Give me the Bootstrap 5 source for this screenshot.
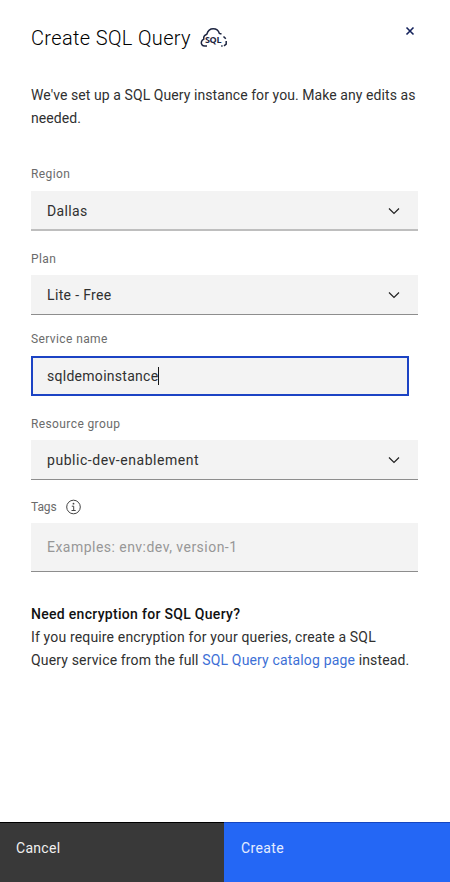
<!DOCTYPE html>
<html lang="en">
<head>
<meta charset="utf-8">
<meta name="viewport" content="width=device-width, initial-scale=1">
<title>Create SQL Query</title>
<link href="https://cdn.jsdelivr.net/npm/bootstrap@5.3.0/dist/css/bootstrap.min.css" rel="stylesheet">
<style>
body { font-family: Roboto, "Open Sans", sans-serif; font-size: 14px; line-height: 23px; letter-spacing: .35px; color: #303030; background: #fff; }
.panel { height: 882px; overflow: hidden; }
.panel-body-area { padding: 26px 32px 0 31px; }
.panel-title { font-size: 20px; line-height: 24px; font-weight: 300; letter-spacing: .35px; color: #000; }
.close-icon { margin-right: 3px; }
.intro { margin-top: 34px; letter-spacing: .075px; white-space: nowrap; }
.field-label { font-size: 12px; line-height: 16px; letter-spacing: .39px; color: #6b6b6b; margin: 0; }
.field-box { height: 40px; padding: 1px 18px 0 16px; background: #f3f3f3; border-bottom: 1px solid #8d8d8d; }
.field-region { margin-top: 36px; }
.field-region .field-label, .field-service .field-label { padding-bottom: 1px; }
.field-region .field-box { border-bottom: 2px solid #bebebe; padding-top: 2px; }
.field-plan { margin-top: 20px; }
.field-service { margin-top: 16px; }
.field-focus { width: 378px; border: 2px solid #1c43c4; padding: 0 14px; letter-spacing: .28px; }
.field-value-wide { letter-spacing: .54px; }
.caret { width: 1px; height: 18px; background: #161616; }
.field-group { margin-top: 20px; }
.field-tags { margin-top: 19px; }
.field-tags .field-label { letter-spacing: -.1px; }
.field-tags .field-box { height: 49px; color: #979797; letter-spacing: .47px; }
.help { margin-top: 31px; letter-spacing: .155px; white-space: nowrap; }
.help strong { font-weight: 500; color: #111; letter-spacing: .3px; }
.help a { color: #3d70d6; }
.action { height: 60px; padding: 13px 16px; letter-spacing: .3px; line-height: 24px; border-top: 1px solid #000; }
.action-cancel { width: 224px; background: #393939; color: #f0f0f0; }
.action-create { background: #2467f5; color: #e4edff; padding-left: 17px; letter-spacing: .4px; border-top-color: #1546c0; }
</style>
<script src="https://cdn.jsdelivr.net/npm/bootstrap@5.3.0/dist/js/bootstrap.bundle.min.js"></script>
</head>
<body>
<div class="panel d-flex flex-column">
  <main class="panel-body-area flex-grow-1">
    <header class="d-flex align-items-start">
      <h1 class="panel-title mb-0">Create SQL Query</h1>
      <svg class="ms-2" width="30" height="24" viewBox="0 0 30 24" fill="none" stroke="#1c2440" stroke-width="1.5">
        <path d="M8 20H5.8C3.2 20 1.9 18 2.4 15.9C2.8 14.3 3.6 13.6 4.8 13.1C4.4 11 5.4 9 7.8 8.2C8.8 5 11.3 2.8 14.2 2.8C17.2 2.8 19.5 4.6 20.4 7.4L22.5 8"/>
        <path d="M24.5 10.5L26.8 12.8M27.2 15V18.2L25 19.8M23.6 19.9H22.2"/>
        <text x="6" y="16.5" font-family="Open Sans, sans-serif" font-size="9" font-weight="700" letter-spacing="0" textLength="16.5" fill="#1c2440" stroke="none">SQL</text>
      </svg>
      <svg class="close-icon ms-auto" width="10" height="10" viewBox="0 0 10 10" stroke="#15235c" stroke-width="1.6"><path d="M1.5 1.5L8.5 8.5M8.5 1.5L1.5 8.5"/></svg>
    </header>
    <p class="intro mb-0">We've set up a SQL Query instance for you. Make any edits as<br>needed.</p>

    <section class="field-region">
      <div class="field-label mb-2">Region</div>
      <div class="field-box d-flex align-items-center justify-content-between"><span>Dallas</span>
        <svg width="12" height="8" viewBox="0 0 12 8" fill="none" stroke="#222" stroke-width="1.2"><path d="M1 1.5L6 6.5L11 1.5"/></svg></div>
    </section>
    <section class="field-plan">
      <div class="field-label mb-2">Plan</div>
      <div class="field-box d-flex align-items-center justify-content-between"><span>Lite - Free</span>
        <svg width="12" height="8" viewBox="0 0 12 8" fill="none" stroke="#222" stroke-width="1.2"><path d="M1 1.5L6 6.5L11 1.5"/></svg></div>
    </section>
    <section class="field-service">
      <div class="field-label mb-2">Service name</div>
      <div class="field-box field-focus d-flex align-items-center"><span>sqldemoinstance</span><span class="caret"></span></div>
    </section>
    <section class="field-group">
      <div class="field-label mb-2">Resource group</div>
      <div class="field-box d-flex align-items-center justify-content-between"><span class="field-value-wide">public-dev-enablement</span>
        <svg width="12" height="8" viewBox="0 0 12 8" fill="none" stroke="#222" stroke-width="1.2"><path d="M1 1.5L6 6.5L11 1.5"/></svg></div>
    </section>
    <section class="field-tags">
      <div class="field-label mb-2 d-flex align-items-center"><span>Tags</span>
        <svg class="ms-2" width="17" height="16" viewBox="0 0 17 16" fill="none" stroke="#444"><circle cx="8.5" cy="8" r="6.8"/><path d="M6.8 7.2H8.7V11.5M6.5 11.5H10.7"/><circle cx="8.5" cy="4.7" r=".9" fill="#444" stroke="none"/></svg></div>
      <div class="field-box d-flex align-items-center"><span>Examples: env:dev, version-1</span></div>
    </section>

    <div class="help"><strong>Need encryption for SQL Query?</strong><br>If you require encryption for your queries, create a SQL<br>Query service from the full <a href="#" class="text-decoration-none">SQL Query catalog page</a> instead.</div>
  </main>
  <footer class="d-flex">
    <div class="action action-cancel">Cancel</div>
    <div class="action action-create flex-grow-1">Create</div>
  </footer>
</div>
</body>
</html>
